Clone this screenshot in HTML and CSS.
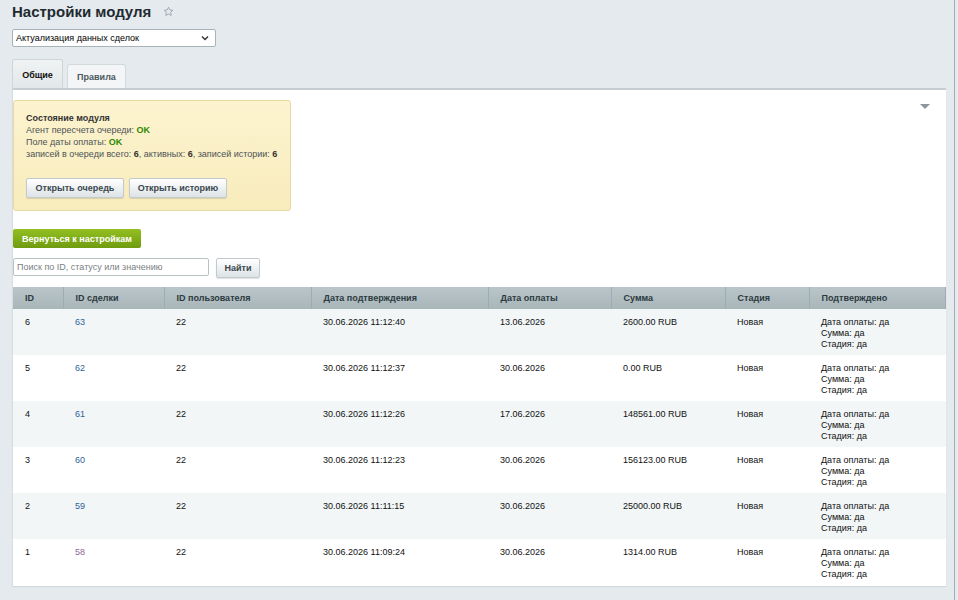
FILE: index.html
```html
<!DOCTYPE html>
<html lang="ru">
<head>
    <meta charset="UTF-8">
    <title>Настройки модуля</title>
    <link rel="stylesheet" href="styles.css">
</head>
<body>
    <div class="page">
        <h1 class="page-title">Настройки модуля <span class="star">
            <svg width="11" height="11" viewBox="0 0 24 24"><path d="M12 2.5l2.9 6.2 6.7.7-5 4.6 1.4 6.7L12 17.3l-6 3.4 1.4-6.7-5-4.6 6.7-.7z" fill="none" stroke="#9aa6ab" stroke-width="2" stroke-linejoin="round"/></svg>
        </span></h1>

        <div class="module-select">
            <span>Актуализация данных сделок</span>
            <svg width="8" height="6" viewBox="0 0 8 6"><path d="M1 1.5l3 3 3-3" fill="none" stroke="#333" stroke-width="1.4"/></svg>
        </div>

        <div class="tabs">
            <div class="tab active">Общие</div>
            <div class="tab">Правила</div>
        </div>

        <div class="panel">
            <span class="panel-arrow"></span>

            <div class="status">
                <div class="status-title">Состояние модуля</div>
                <div>Агент пересчета очереди: <b class="ok">OK</b></div>
                <div>Поле даты оплаты: <b class="ok">OK</b></div>
                <div>записей в очереди всего: <b>6</b>, активных: <b>6</b>, записей истории: <b>6</b></div>
                <div class="status-buttons">
                    <button class="btn">Открыть очередь</button>
                    <button class="btn">Открыть историю</button>
                </div>
            </div>

            <button class="btn-green">Вернуться к настройкам</button>

            <form class="search">
                <input type="text" placeholder="Поиск по ID, статусу или значению">
                <button class="btn" type="button">Найти</button>
            </form>

            <table class="grid">
                <colgroup>
                    <col style="width:50px"><col style="width:101px"><col style="width:147px"><col style="width:177px">
                    <col style="width:123px"><col style="width:114px"><col style="width:84px"><col>
                </colgroup>
                <thead>
                    <tr>
                        <th>ID</th>
                        <th>ID сделки</th>
                        <th>ID пользователя</th>
                        <th>Дата подтверждения</th>
                        <th>Дата оплаты</th>
                        <th>Сумма</th>
                        <th>Стадия</th>
                        <th>Подтверждено</th>
                    </tr>
                </thead>
                <tbody>
                    <tr>
                        <td>6</td><td><a href="#">63</a></td><td>22</td><td>30.06.2026 11:12:40</td><td>13.06.2026</td><td>2600.00 RUB</td><td>Новая</td>
                        <td>Дата оплаты: да<br>Сумма: да<br>Стадия: да</td>
                    </tr>
                    <tr>
                        <td>5</td><td><a href="#">62</a></td><td>22</td><td>30.06.2026 11:12:37</td><td>30.06.2026</td><td>0.00 RUB</td><td>Новая</td>
                        <td>Дата оплаты: да<br>Сумма: да<br>Стадия: да</td>
                    </tr>
                    <tr>
                        <td>4</td><td><a href="#">61</a></td><td>22</td><td>30.06.2026 11:12:26</td><td>17.06.2026</td><td>148561.00 RUB</td><td>Новая</td>
                        <td>Дата оплаты: да<br>Сумма: да<br>Стадия: да</td>
                    </tr>
                    <tr>
                        <td>3</td><td><a href="#">60</a></td><td>22</td><td>30.06.2026 11:12:23</td><td>30.06.2026</td><td>156123.00 RUB</td><td>Новая</td>
                        <td>Дата оплаты: да<br>Сумма: да<br>Стадия: да</td>
                    </tr>
                    <tr>
                        <td>2</td><td><a href="#">59</a></td><td>22</td><td>30.06.2026 11:11:15</td><td>30.06.2026</td><td>25000.00 RUB</td><td>Новая</td>
                        <td>Дата оплаты: да<br>Сумма: да<br>Стадия: да</td>
                    </tr>
                    <tr>
                        <td>1</td><td><a href="#" class="visited">58</a></td><td>22</td><td>30.06.2026 11:09:24</td><td>30.06.2026</td><td>1314.00 RUB</td><td>Новая</td>
                        <td>Дата оплаты: да<br>Сумма: да<br>Стадия: да</td>
                    </tr>
                </tbody>
            </table>
        </div>
    </div>
</body>
</html>
```

FILE: styles.css
```css
* {
    padding: 0px;
    margin: 0px;
    box-sizing: border-box;
}

html, body {
    background-color: #e4eaed;
    font-family: "Liberation Sans", Arial, sans-serif;
    font-size: 9px;
    color: #222;
}

.page {
    width: 955px;
    min-height: 600px;
    padding: 0px 8px 0px 12px;
    border-right: 1px solid #a3acb0;
    overflow: hidden;
}

.page-title {
    margin-top: 0px;
    height: 22px;
    font-size: 15px;
    font-weight: 700;
    color: #1f2a30;
    display: flex;
    align-items: center;
}

.star {
    margin-left: 12px;
    display: flex;
}

.module-select {
    margin-top: 7px;
    width: 204px;
    height: 18px;
    padding: 0px 6px 0px 3px;
    display: flex;
    justify-content: space-between;
    align-items: center;
    background-color: #fff;
    border: 1px solid #a8b3b7;
    border-radius: 2px;
    color: #000;
}

.tabs {
    margin-top: 12px;
    height: 29px;
    display: flex;
    align-items: flex-end;
}

.tab {
    height: 24px;
    width: 59px;
    margin-left: 4px;
    display: flex;
    align-items: center;
    justify-content: center;
    font-weight: 700;
    color: #4b5961;
    background-color: #f3f5f6;
    border: 1px solid #d3dadd;
    border-bottom: none;
    border-radius: 3px 3px 0px 0px;
}

.tab.active {
    margin-left: 0px;
    width: 51px;
    height: 29px;
    padding-top: 1px;
    color: #111;
    background: linear-gradient(#f0f3f4, #e2e7e9);
    border-color: #cfd6d9;
}

.panel {
    position: relative;
    height: 498px;
    padding-top: 10px;
    background-color: #fff;
    border-top: 2px solid #c6ced1;
    border-left: 1px solid #d8dee0;
    box-shadow: 0px 1px 1px rgba(0, 0, 0, 0.08);
}

.panel-arrow {
    position: absolute;
    top: 14px;
    right: 16px;
    border-left: 5px solid transparent;
    border-right: 5px solid transparent;
    border-top: 5px solid #8d969a;
}

.status {
    width: 278px;
    height: 111px;
    padding: 11px 12px 0px 12px;
    line-height: 12px;
    color: #4d5357;
    background: linear-gradient(#fcf3cf, #f8ecbc);
    border: 1px solid #e6d9a5;
    border-radius: 3px;
}

.status-title {
    font-weight: 700;
    color: #333;
}

.status b {
    color: #333;
}

.status .ok {
    color: #2d8a00;
}

.status-buttons {
    margin-top: 18px;
    display: flex;
    gap: 5px;
}

.btn {
    height: 20px;
    padding: 0px 10px;
    font-family: inherit;
    font-size: 9px;
    font-weight: 700;
    white-space: nowrap;
    color: #3c4850;
    background: linear-gradient(#ffffff, #dde3e6);
    border: 1px solid #c3cacd;
    border-radius: 2px;
    box-shadow: 0px 1px 1px rgba(0, 0, 0, 0.12);
    cursor: pointer;
}

.status .btn {
    width: 98px;
    padding: 0px;
}

.btn-green {
    display: block;
    margin-top: 18px;
    width: 128px;
    height: 19px;
    font-family: inherit;
    font-size: 9px;
    font-weight: 700;
    color: #fff;
    background: linear-gradient(#93bf22, #6f9b10);
    border: none;
    border-radius: 2px;
    cursor: pointer;
}

.search {
    margin-top: 10px;
    display: flex;
    gap: 7px;
}

.search input {
    width: 196px;
    height: 18px;
    padding-left: 3px;
    font-family: inherit;
    font-size: 9px;
    border: 1px solid #b9c2c5;
    border-radius: 2px;
    outline: none;
}

.search input::placeholder {
    color: #7a7f83;
}

.search .btn {
    width: 44px;
    padding: 0px;
}

.grid {
    margin-top: 9px;
    width: 933px;
    border-collapse: collapse;
    table-layout: fixed;
}

.grid thead th {
    height: 22px;
    padding-left: 12px;
    text-align: left;
    font-weight: 700;
    color: #2c3a40;
    background: linear-gradient(#b9c5c9, #a8b5b9);
    border-left: 1px solid #cbd4d7;
    border-right: 1px solid #9eabaf;
}

.grid thead th:first-child {
    border-left: none;
}

.grid tbody td {
    height: 46px;
    padding: 8px 0px 0px 12px;
    vertical-align: top;
    line-height: 11px;
    color: #111;
}

.grid tbody tr:nth-child(odd) {
    background-color: #f2f6f7;
}

.grid a {
    color: #2f5f97;
    text-decoration: none;
}

.grid a.visited {
    color: #8c6b91;
}
```
